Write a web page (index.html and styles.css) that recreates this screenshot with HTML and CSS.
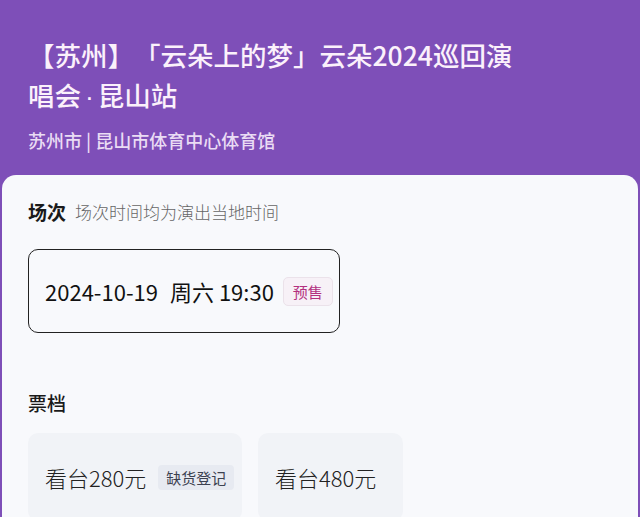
FILE: index.html
```html
<!DOCTYPE html>
<html>
	<head>
		<meta charset="utf-8">
		<title>云朵巡回演唱会·昆山站</title>
		<link rel="stylesheet" href="styles.css">
	</head>
	<body>
		<div class="head">
			<h1 class="title">【苏州】「云朵上的梦」云朵2024巡回演<br>唱会<span class="dot">·</span>昆山站</h1>
			<p class="place">苏州市 | 昆山市体育中心体育馆</p>
		</div>
		<div class="card">
			<div class="sec-title">
				<b>场次</b>
				<span>场次时间均为演出当地时间</span>
			</div>
			<div class="session">
				<span class="date">2024-10-19</span>
				<span class="time">周六 19:30</span>
				<em class="tag">预售</em>
			</div>
			<div class="sec-title sec-ticket">
				<b>票档</b>
			</div>
			<div class="tickets">
				<div class="ticket t1">
					<span>看台280元</span>
					<em class="lack">缺货登记</em>
				</div>
				<div class="ticket t2">
					<span>看台480元</span>
				</div>
			</div>
		</div>
	</body>
</html>
```

FILE: styles.css
```css
body, h1, p{
	margin: 0;
	padding: 0;
}
body{
	background: #7e4fb8;
	font-family: "Noto Sans CJK SC", "Noto Sans", sans-serif;
	height: 517px;
	overflow: hidden;
	display: flex;
	flex-direction: column;
}
em{
	font-style: normal;
}
.head{
	padding: 35px 28px 22px;
	color: #fbf1fb;
}
.title{
	font-size: 26.5px;
	line-height: 40px;
	font-weight: 500;
	white-space: nowrap;
	text-spacing-trim: space-all;
}
.dot{
	font-family: "Liberation Sans", sans-serif;
	margin: 0 4px;
}
.place{
	margin-top: 10px;
	font-size: 18px;
	line-height: 26px;
	font-weight: 500;
	color: #eadcf4;
}
.card{
	flex: 1;
	margin: 0 2px;
	padding: 24px 26px 0;
	background: #f8f9fc;
	border-radius: 14px 14px 0 0;
	overflow: hidden;
}
.sec-title{
	display: flex;
	align-items: center;
	gap: 9px;
	line-height: 26px;
}
.sec-title b{
	font-size: 19px;
	font-weight: 700;
	color: #1a1a1a;
}
.sec-title span{
	font-size: 17px;
	color: #666;
	font-weight: 300;
}
.session{
	margin-top: 24px;
	width: 312px;
	height: 84px;
	box-sizing: border-box;
	border: 1.5px solid #222;
	border-radius: 10px;
	display: flex;
	align-items: center;
	padding-left: 16px;
	font-size: 22px;
	color: #111;
}
.date{
	margin-right: 12px;
}
.tag{
	margin-left: 9px;
	padding: 0 9px;
	height: 27px;
	line-height: 27px;
	font-size: 15px;
	color: #b3307f;
	background: #f7f1f7;
	border: 1px solid #ebe2ea;
	border-radius: 5px;
}
.sec-ticket{
	margin-top: 57px;
}
.sec-ticket b{
	font-weight: 500;
}
.tickets{
	margin-top: 17px;
	display: flex;
	gap: 16px;
}
.ticket{
	height: 88px;
	flex-shrink: 0;
	border-radius: 10px;
	background: #f1f3f7;
	display: flex;
	align-items: center;
	padding-left: 17px;
	box-sizing: border-box;
	font-size: 22px;
	font-weight: 300;
	color: #222;
	gap: 12px;
}
.t1{
	width: 214px;
}
.t2{
	width: 145px;
}
.lack{
	padding: 0 8px;
	height: 25px;
	line-height: 25px;
	font-size: 15px;
	font-weight: 400;
	color: #3c4150;
	background: #e7eaf1;
	border-radius: 4px;
}
```
